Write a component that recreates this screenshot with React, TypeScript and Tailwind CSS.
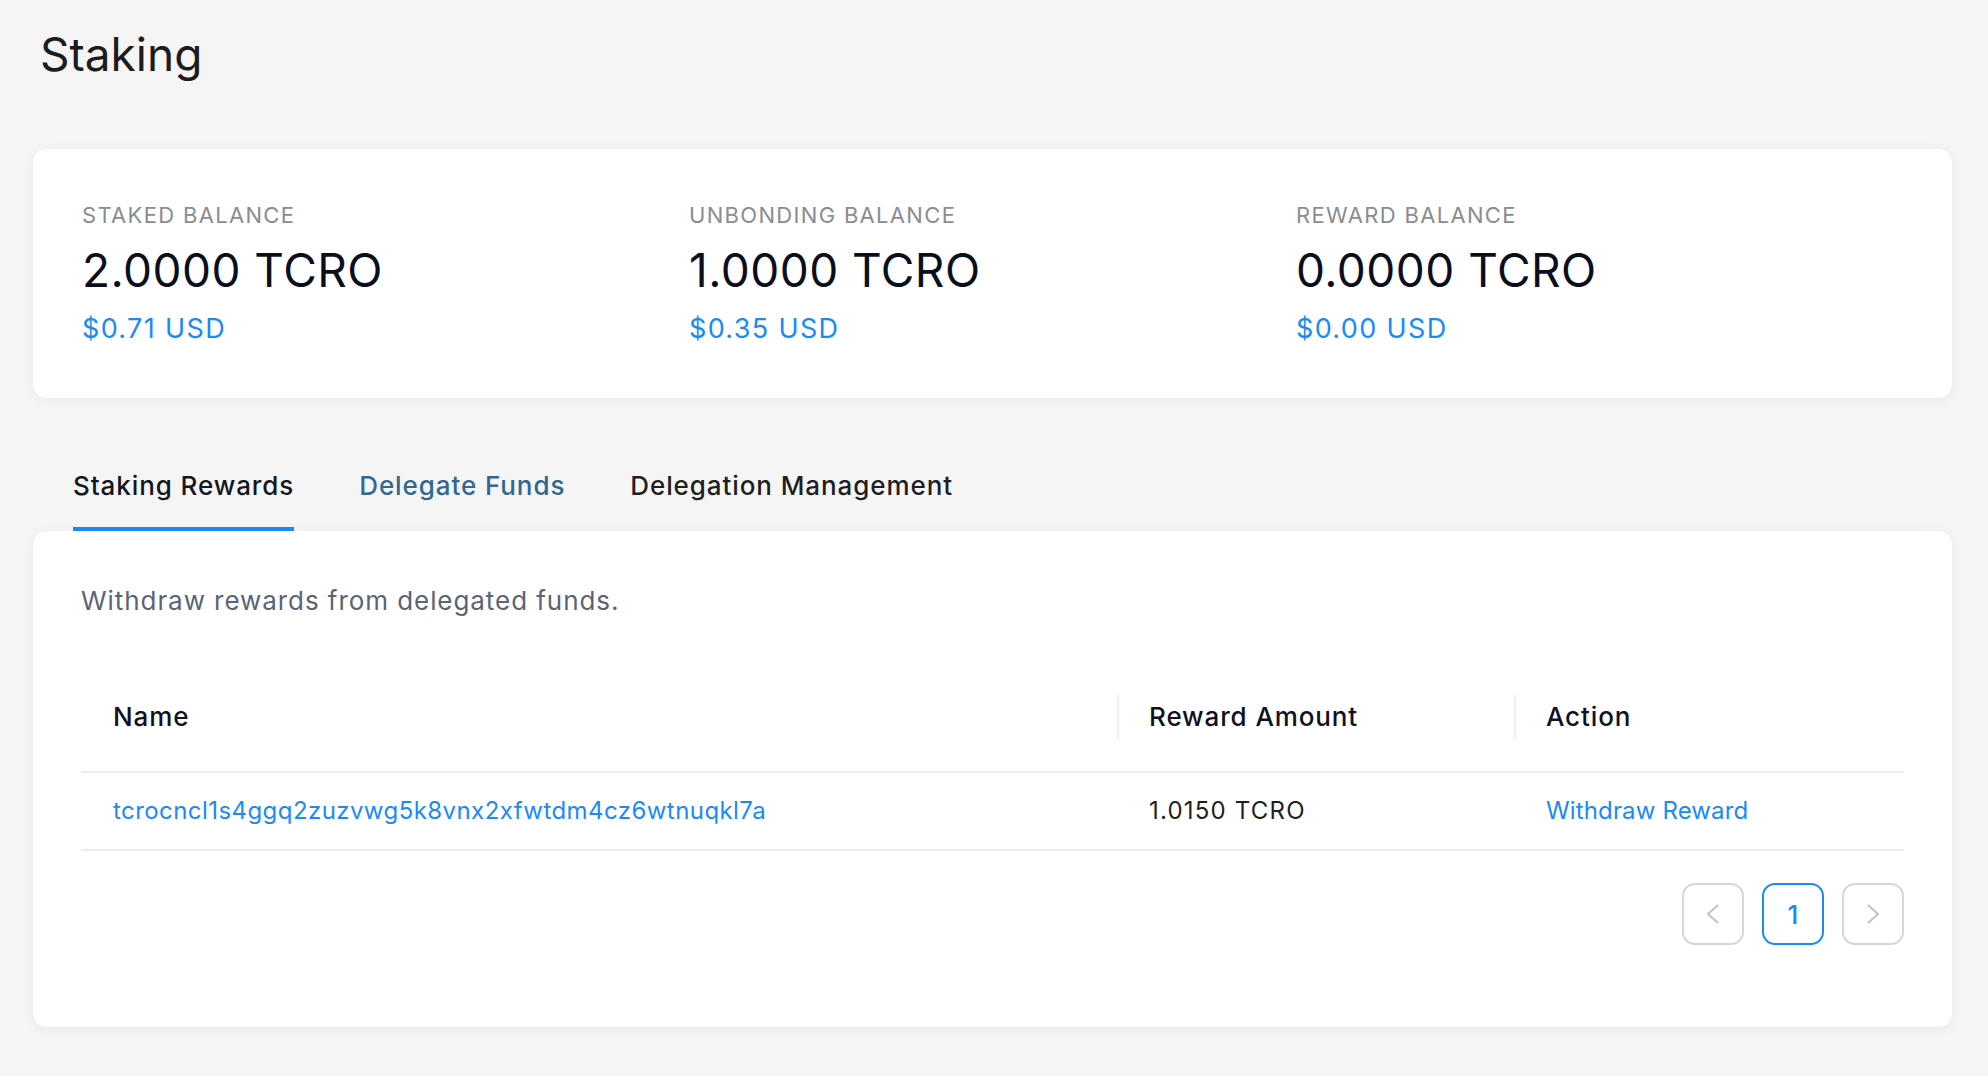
const balances = [
  { label: "Staked Balance", amount: "2.0000 TCRO", usd: "$0.71 USD" },
  { label: "Unbonding Balance", amount: "1.0000 TCRO", usd: "$0.35 USD" },
  { label: "Reward Balance", amount: "0.0000 TCRO", usd: "$0.00 USD" },
]

function Chevron({ dir }: { dir: "left" | "right" }) {
  return (
    <svg width="16" height="22" viewBox="0 0 16 22" fill="none">
      {dir === "left" ? (
        <polyline points="13,2 3,11 13,20" stroke="#c2c2c2" strokeWidth="2" />
      ) : (
        <polyline points="3,2 13,11 3,20" stroke="#c2c2c2" strokeWidth="2" />
      )}
    </svg>
  )
}

export default function App() {
  return (
    <div
      className="min-h-[1076px] bg-[#f5f5f5] pl-[33px] pr-[36px] pt-[26px]"
      style={{ fontFamily: "Inter, 'Noto Sans', sans-serif" }}
    >
      <h1 className="pl-[7px] text-[46px] leading-[56px] font-normal text-[#1c1c1e]">Staking</h1>

      <div className="mt-[67px] grid grid-cols-3 rounded-[14px] bg-white px-[49px] py-[52px] shadow-[0_2px_14px_rgba(0,0,0,0.05)]">
        {balances.map((b) => (
          <div key={b.label}>
            <div className="text-[22px] leading-[28px] uppercase tracking-[0.06em] text-[#8a8c92]">{b.label}</div>
            <div className="mt-[13px] text-[46px] leading-[56px] tracking-[0.01em] text-[#0b0f1c]">{b.amount}</div>
            <div className="mt-[14px] text-[27px] leading-[34px] tracking-[0.05em] text-[#1a8af7]">{b.usd}</div>
          </div>
        ))}
      </div>

      <div className="mt-[72px] flex gap-[65px] pl-[40px] text-[26px] leading-[32px] font-medium tracking-[0.035em]">
        <button className="border-b-4 border-[#1a8af7] pb-[25px] text-[#141622]">Staking Rewards</button>
        <button className="border-b-4 border-transparent pb-[25px] text-[#31688f]">Delegate Funds</button>
        <button className="border-b-4 border-transparent pb-[25px] text-[#1f1f1f]">Delegation Management</button>
      </div>

      <div className="rounded-[14px] bg-white px-[48px] pt-[54px] pb-[82px] shadow-[0_2px_14px_rgba(0,0,0,0.05)]">
        <p className="text-[26px] leading-[32px] tracking-[0.036em] text-[#5b6378]">
          Withdraw rewards from delegated funds.
        </p>

        <div className="mt-[46px]">
          <div className="grid h-[110px] grid-cols-[1036px_397px_1fr] items-center border-b-2 border-[#ededed] text-[26px] leading-[32px] font-medium tracking-[0.034em] text-[#0f1120]">
            <div className="px-[32px]">Name</div>
            <div className="relative px-[32px]">
              <span className="absolute left-0 top-[-6px] h-[44px] w-[2px] bg-[#f0f0f0]" />
              Reward Amount
            </div>
            <div className="relative px-[32px]">
              <span className="absolute left-0 top-[-6px] h-[44px] w-[2px] bg-[#f0f0f0]" />
              Action
            </div>
          </div>
          <div className="grid h-[78px] grid-cols-[1036px_397px_1fr] items-center border-b-2 border-[#ededed] text-[24px] leading-[30px]">
            <a className="px-[32px] tracking-[0.018em] text-[#1a8af7]">tcrocncl1s4ggq2zuzvwg5k8vnx2xfwtdm4cz6wtnuqkl7a</a>
            <div className="px-[32px] tracking-[0.05em] text-[#1f1f1f]">1.0150 TCRO</div>
            <a className="px-[32px] tracking-[0.006em] text-[#1a8af7]">Withdraw Reward</a>
          </div>
        </div>

        <div className="mt-[32px] flex justify-end gap-[18px]">
          <button className="flex h-[62px] w-[62px] items-center justify-center rounded-[13px] border-2 border-[#d6d6d6]">
            <Chevron dir="left" />
          </button>
          <button className="flex h-[62px] w-[62px] items-center justify-center rounded-[13px] border-2 border-[#1a8af7] text-[26px] font-medium text-[#1a8af7]">
            1
          </button>
          <button className="flex h-[62px] w-[62px] items-center justify-center rounded-[13px] border-2 border-[#d6d6d6]">
            <Chevron dir="right" />
          </button>
        </div>
      </div>
    </div>
  )
}
